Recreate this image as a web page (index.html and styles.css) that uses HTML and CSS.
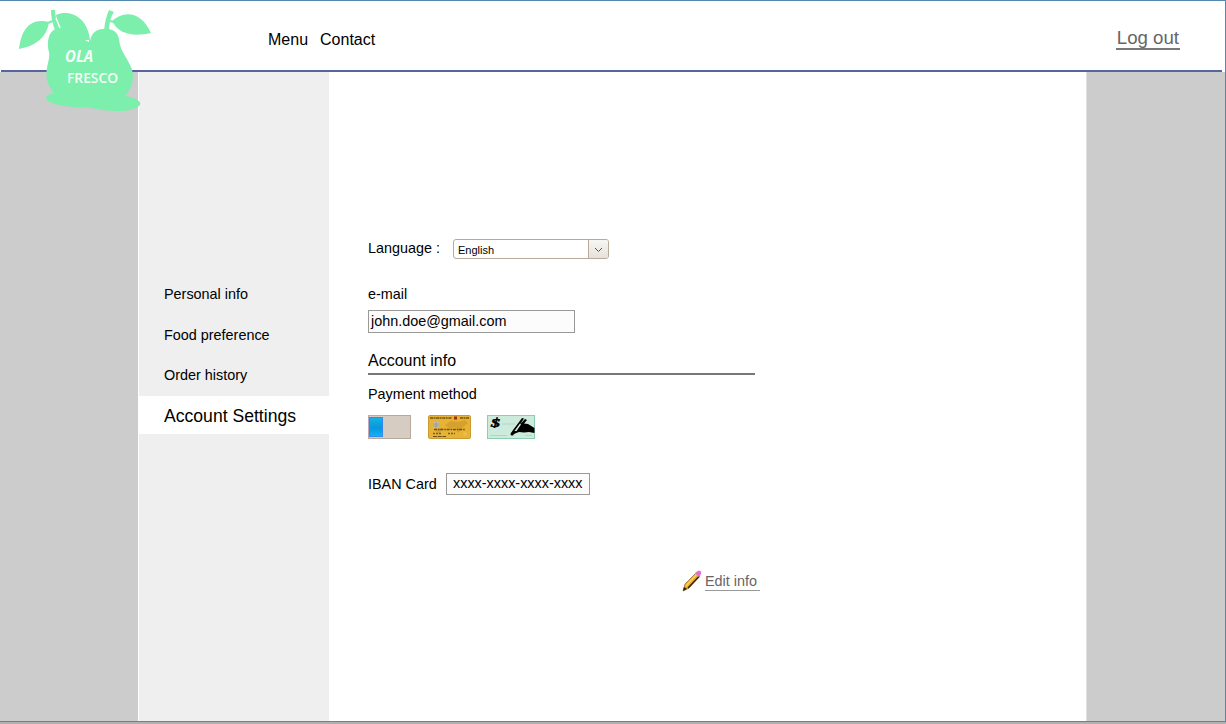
FILE: index.html
```html
<!DOCTYPE html>
<html lang="en">
<head>
<meta charset="utf-8">
<title>Ola Fresco – Account Settings</title>
<link rel="stylesheet" href="styles.css">
</head>
<body>
<div class="page">
  <header class="header">
    <svg class="logo" width="140" height="110" viewBox="14 4 140 110" role="img" aria-label="Ola Fresco">
      <g fill="#7cefac">
        <path d="M19 49C21 31 29 17 49 22C47 37 36 46 19 49Z"/>
        <path d="M112 21C124 10 141 11 151 33C132 37 119 34 112 21Z"/>
        <path d="M48 23L57 19M106 20L114 22" stroke="#7cefac" stroke-width="2"/>
        <path d="M51 10L55 10Q55 18 60 29L55 30Q51 20 51 10Z"/>
        <path d="M109 10L114 12Q109 19 109 31L104 31Q105 19 109 10Z"/>
        <path d="M56 15C69 9 84 17 88 31C89 34 90 38 90 41C92 32 97 28 109 29C119 31 119 39 120 45C122 54 134 66 133 77C132 88 128 93 125 96C134 97 142 101 140 105C133 113 110 112 91 108C71 107 47 106 46 97C47 94 51 94 54 93C48 86 45 78 47 68C48 62 50 57 49 52C47 44 47 31 58 28Z"/>
      </g>
      <path d="M56 18L60 28" stroke="#fff" stroke-width="1.5"/>
      <path d="M85 40L89 40L89 42Z" fill="#fff"/>
      <text class="logo-text logo-text-top" x="65" y="62" textLength="28" lengthAdjust="spacingAndGlyphs">OLA</text>
      <text class="logo-text" x="67" y="83" textLength="51" lengthAdjust="spacingAndGlyphs">FRESCO</text>
    </svg>
    <nav class="top-nav"><a>Menu</a><a>Contact</a></nav>
    <a class="logout">Log out</a>
  </header>
  <div class="body">
    <aside class="sidebar">
      <a class="side-item">Personal info</a>
      <a class="side-item side-food">Food preference</a>
      <a class="side-item">Order history</a>
      <a class="side-item side-active">Account Settings</a>
    </aside>
    <main class="content">
      <div class="row language">
        <span class="language-label">Language :</span>
        <div class="select"><span class="select-value">English</span><span class="select-arrow"><svg width="9" height="6" viewBox="0 0 9 6"><path d="M1 1L4.5 4.500L8 1" fill="none" stroke="#555"/></svg></span></div>
      </div>
      <div class="email-label">e-mail</div>
      <div class="input email">john.doe@gmail.com</div>
      <h2 class="account-title">Account info</h2>
      <div class="payment-label">Payment method</div>
      <div class="row methods">
        <svg class="toggle" width="43" height="24" viewBox="0 0 43 24">
          <defs><linearGradient id="blue" x2="0" y2="1"><stop stop-color="#16b3e5"/><stop offset=".55" stop-color="#0797dc"/><stop offset="1" stop-color="#16b3f4"/></linearGradient></defs>
          <rect x=".5" y=".5" width="42" height="23" fill="#d6ccc1" stroke="#b7a99b"/>
          <path d="M.5 23.500V.5H15" fill="none" stroke="#c2a5ba"/>
          <rect x="1.500" y="2.500" width="13" height="19" fill="url(#blue)" stroke="#3389f2"/>
        </svg>
        <svg class="card" width="43" height="24" viewBox="0 0 43 24">
          <rect x=".5" y=".5" width="42" height="23" rx="1.500" fill="#e6b335" stroke="#cb9b32"/>
          <path d="M17 10L23 6L31 7L37 5L40 8L34 13L30 18L27 12L22 14ZM7 14L14 13L11 20Z" fill="#d5a02c"/>
          <path d="M2 3H24M32 3H41" stroke="#73541c" stroke-width="1.700" stroke-dasharray="3 .5 2 .6"/>
          <rect x="26" y="1.500" width="3" height="3" fill="#a12d17"/>
          <rect x="5" y="7" width="6" height="6" rx="1" fill="#c3c1af"/>
          <path d="M5 9H11M5 11H11M8 7V13" stroke="#807d70" stroke-width=".5"/>
          <path d="M6 14.500H37" stroke="#65501e" stroke-width="1.300" stroke-dasharray="3 1 1.500 .8"/>
          <path d="M5 18.500H13M20 18.500H27" stroke="#79602a" stroke-width="1.300" stroke-dasharray="2 1"/>
          <path d="M5 21.500H18" stroke="#65501e" stroke-width="1.200" stroke-dasharray="4 .7"/>
          <circle cx="37" cy="19" r="2" fill="#edbe49"/>
        </svg>
        <svg class="cheque" width="48" height="24" viewBox="0 0 48 24">
          <rect x=".5" y=".5" width="47" height="23" fill="#cdebdc" stroke="#8bcdb0"/>
          <path d="M15 9H28M3 20.500H20M38 20.500H45" stroke="#b4d4c4"/>
          <text class="dollar" x="4" y="11.500" textLength="9" lengthAdjust="spacingAndGlyphs">$</text>
          <path d="M24 18L26 15L35 3L37 3.500L33 9.500L38 4L40 5L37 8.500L41 9L47.500 13V18L42 17L37 17.500L32 17L28 18.500L25 20.500Z"/>
          <path d="M27.500 16L33 8.500L34 9.500L29.500 16Z" fill="#d8f1e5"/>
          <circle cx="25" cy="19" r="1.500"/>
        </svg>
      </div>
      <div class="row iban"><span class="iban-label">IBAN Card</span><div class="input iban-value">xxxx-xxxx-xxxx-xxxx</div></div>
      <div class="row edit">
        <svg class="pencil" width="20" height="22" viewBox="0 0 20 22">
          <path d="M1 21L3 14L14 3L18 6L7 18Z" fill="#edaa2e" stroke="#805017" stroke-width=".6"/>
          <path d="M4 16L15 4" stroke="#ffd04c" stroke-width="1.600"/>
          <path d="M6 18L17 6.500" stroke="#302315" stroke-width="1.400"/>
          <path d="M1 21L2 17L5 19Z" fill="#222"/>
          <path d="M13 3L16 .8Q20 0 19 4L17.500 6.500Z" fill="#e66bd5"/>
          <path d="M13 3L17.500 7" stroke="#b9a3a0" stroke-width="1"/>
        </svg>
        <a class="edit-link">Edit info</a>
      </div>
    </main>
  </div>
</div>
</body>
</html>
```
FILE: styles.css
```css
* { box-sizing: border-box; }
body { margin: 0; background: #b0b0b0; font-family: "Liberation Sans", Arial, sans-serif; font-size: 14.4px; line-height: 20px; color: #000; }
.page { height: 722px; display: flex; flex-direction: column; border: solid #5588ae; border-width: 1px 1px 1px 0; background: #ccc; }
.header { position: relative; flex: none; height: 71px; display: flex; justify-content: space-between; align-items: flex-start; padding: 0 45px 0 268px; background: #fff; }
.header::after { content: ""; position: absolute; left: 1px; right: 3px; bottom: 0; height: 2px; background: #5864a0; }
.logo { position: absolute; left: 14px; top: 3px; z-index: 1; }
.logo-text { font: 600 14px "Open Sans", "Noto Sans", sans-serif; fill: #f4fff8; }
.logo-text-top { font-size: 16px; font-weight: 700; font-style: italic; }
.top-nav { display: flex; gap: 12px; padding-top: 29px; font-size: 16px; }
.logout { margin-top: 26px; height: 23px; font-size: 18.67px; line-height: 22px; color: #666; border-bottom: 2px solid #777; padding: 0 1px; }
.body { flex: 1; display: flex; padding-left: 138px; }
.sidebar { width: 191px; flex: none; border-left: 1px solid #fff; background: #efefef; padding-top: 212px; display: flex; flex-direction: column; }
.side-item { padding-left: 25px; margin-bottom: 20px; }
.side-food { margin-top: 1px; }
.side-active { background: #fff; height: 38px; margin: -9px 0 0; line-height: 41px; font-size: 17.6px; }
.content { width: 758px; background: #fff; border-right: 1px solid #e0e0e0; padding: 166px 0 0 39px; }
.row { display: flex; }
.language { height: 21px; }
.language-label { width: 85px; }
.select { width: 156px; height: 20px; margin-top: 1px; display: flex; border: 1px solid #b8a99b; border-radius: 3px; font-size: 11px; overflow: hidden; }
.select-value { flex: 1; padding-left: 4px; line-height: 21px; }
.select-arrow { width: 20px; padding-top: 1px; display: flex; align-items: center; justify-content: center; border-left: 1px solid #b8a99b; background: linear-gradient(#f8f6f3, #e6e1da); }
.email-label { margin-top: 25px; }
.input { border: 1px solid #999; background: #fcfcfd; }
.email { width: 207px; height: 23px; margin-top: 6px; padding-left: 2px; line-height: 20px; }
.account-title { width: 387px; height: 25px; margin: 17px 0 0; border-bottom: 2px solid #777; font-weight: normal; font-size: 16px; line-height: 22px; }
.payment-label { margin-top: 9px; }
.methods { height: 24px; margin-top: 11px; }
.card { margin-left: 17px; }
.cheque { margin-left: 16px; }
.dollar { font: italic bold 13px "Liberation Serif", serif; stroke: #000; stroke-width: .5px; }
.iban { margin-top: 34px; }
.iban-label { width: 78px; padding-top: 1px; }
.iban-value { width: 144px; height: 22px; padding-left: 6px; line-height: 19px; }
.edit { margin: 75px 0 0 314px; }
.pencil { margin-right: 3px; }
.edit-link { margin-top: 1px; height: 20px; width: 55px; color: #666; border-bottom: 1px solid #999; }
```
